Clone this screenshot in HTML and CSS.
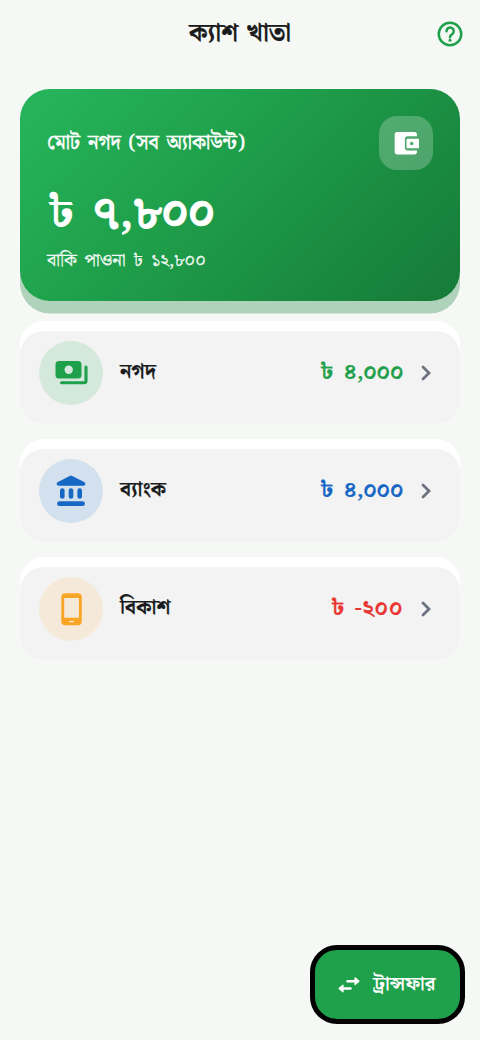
FILE: index.html
```html
<!DOCTYPE html>
<html lang="bn">
<head>
<meta charset="utf-8">
<title>ক্যাশ খাতা</title>
<link rel="stylesheet" href="styles.css">
</head>
<body>
<div class="screen">
  <header class="topbar">
    <h1 class="title">ক্যাশ খাতা</h1>
    <svg class="help" viewBox="0 0 24 24" fill="none" stroke="currentColor" stroke-width="2"><circle cx="12" cy="12" r="9"/><path d="M9.200 9.800a2.900 2.900 0 1 1 4.700 2.200c-1 .8-1.900 1.200-1.900 2.500" stroke-linecap="round"/><circle cx="12" cy="17" r="1.200" fill="currentColor" stroke="none"/></svg>
  </header>
  <main class="content">
    <section class="total">
      <div class="total-head">
        <span class="total-label">মোট নগদ (সব অ্যাকাউন্ট)</span>
        <span class="wallet"><svg viewBox="0 0 24 24" fill="currentColor"><path d="M20.700 17.800V19c0 1.100-.9 2-2 2H4.200a2 2 0 0 1-2-2V4.500c0-1.100.89-2 2-2h14.500c1.100 0 2 .9 2 2v1.500H13a2.300 2.300 0 0 0-2.300 2.300v7.200c0 1.300.9 2.300 2.300 2.300zM22.300 16V8H13a1 1 0 0 0-1 1v6a1 1 0 0 0 1 1zm-6-2.500a1.500 1.500 0 1 1 0-3 1.500 1.500 0 0 1 0 3z"/></svg></span>
      </div>
      <div class="total-value">৳ <span class="digits">৭,৮০০</span></div>
      <div class="total-due">বাকি পাওনা ৳ <span class="digits">১২,৮০০</span></div>
    </section>
    <section class="accounts">
      <article class="account cash">
        <span class="badge"><svg viewBox="0 0 33 33" fill="currentColor"><path fill-rule="evenodd" d="M4 4h19a3.500 3.500 0 0 1 3.500 3.500V18a3.500 3.500 0 0 1-3.500 3.500H4A3.500 3.500 0 0 1 .5 18V7.500A3.500 3.500 0 0 1 4 4zm9.700 4.600a4.200 4.200 0 1 0 0 8.400 4.200 4.200 0 0 0 0-8.400z"/><path d="M31 10v13.700a2 2 0 0 1-2 2H6.500" fill="none" stroke="currentColor" stroke-width="3.100" stroke-linecap="round"/></svg></span>
        <span class="name">নগদ</span>
        <span class="amount">৳ <span class="digits">৪,০০০</span></span>
        <svg class="chevron" viewBox="0 0 12 16"><path d="M3 2l6 6-6 6"/></svg>
      </article>
      <article class="account bank">
        <span class="badge"><svg viewBox="0 0 33 33" fill="currentColor"><path d="M14.800.9q1.200-.6 2.400 0l11.900 6.100c2 1.100 1.500 3.700-.8 3.700H3.700c-2.300 0-2.800-2.600-.8-3.700z"/><rect x="5" y="13.300" width="4.600" height="10.500" rx="2.300"/><rect x="13.700" y="13.300" width="4.600" height="10.500" rx="2.300"/><rect x="22.400" y="13.300" width="4.600" height="10.500" rx="2.300"/><rect x="2.100" y="26.300" width="27.800" height="4.800" rx="2.400"/></svg></span>
        <span class="name">ব্যাংক</span>
        <span class="amount">৳ <span class="digits">৪,০০০</span></span>
        <svg class="chevron" viewBox="0 0 12 16"><path d="M3 2l6 6-6 6"/></svg>
      </article>
      <article class="account mobile">
        <span class="badge"><svg viewBox="0 0 33 33" fill="currentColor"><path fill-rule="evenodd" d="M10.300.2h12.500a4 4 0 0 1 4 4v24a4 4 0 0 1-4 4H10.300a4 4 0 0 1-4-4v-24a4 4 0 0 1 4-4zM9.200 5v19.800h14.700V5zm5 22.900v1.400h4.700v-1.400z"/></svg></span>
        <span class="name">বিকাশ</span>
        <span class="amount wide">৳ <span class="digits">-২০০</span></span>
        <svg class="chevron" viewBox="0 0 12 16"><path d="M3 2l6 6-6 6"/></svg>
      </article>
    </section>
  </main>
  <button class="transfer">
    <svg viewBox="0 0 22 16"><path d="M9.500 4.200h8M12.500 11.500H5" fill="none" stroke="currentColor" stroke-width="2.500" stroke-linecap="round"/><path d="M17 .8l4 3.400-4 3.400zM5 8.100L1 11.500l4 3.400z" fill="currentColor" stroke="currentColor" stroke-width="1.200" stroke-linejoin="round"/></svg>
    <span>ট্রান্সফার</span>
  </button>
</div>
</body>
</html>
```
FILE: styles.css
```css
* { box-sizing: border-box; }
body {
  margin: 0;
  background: #f6f8f6;
  color: #191b1c;
  font-family: "Noto Serif Bengali", "Noto Sans Bengali", "Liberation Serif", serif;
}
.screen { height: 1040px; display: flex; flex-direction: column; overflow: hidden; }
.topbar {
  height: 68px;
  padding: 0 15px;
  display: grid;
  grid-template-columns: 30px 1fr 30px;
  align-items: center;
}
.title { grid-column: 2; margin: 0; text-align: center; font-size: 25px; font-weight: 700; line-height: 40px; word-spacing: 2px; -webkit-text-stroke: .2px currentColor; }
.help { width: 30px; height: 30px; color: #1fa04b; }
.content { padding: 21px 20px 0; flex: 1; }
.total {
  height: 212px;
  padding: 27px;
  border-radius: 30px;
  background: linear-gradient(135deg, #26b65b 0%, #1fa04b 40%, #167a38 100%);
  box-shadow: 0 12.500px 0 #afd2bb;
  color: #fff;
}
.total-head { display: flex; justify-content: space-between; align-items: center; height: 54px; }
.total-label { font-size: 20px; line-height: 30px; word-spacing: 3px; white-space: nowrap; -webkit-text-stroke: .5px currentColor; }
.wallet {
  width: 54px; height: 54px; border-radius: 18px; background: rgba(255, 255, 255, .23);
  display: grid; place-items: center;
}
.wallet svg { width: 29px; height: 29px; }
.total-value { margin-top: 16px; font-size: 45px; font-weight: 700; line-height: 56px; white-space: nowrap; word-spacing: 6px; }
.total-value .digits { letter-spacing: -1.200px; -webkit-text-stroke: .7px currentColor; }
.total-due { margin-top: 3px; font-size: 18.200px; line-height: 32px; word-spacing: 3px; color: rgba(255, 255, 255, .9); white-space: nowrap; -webkit-text-stroke: .3px currentColor; }
.total-due .digits { letter-spacing: -.5px; }
.accounts { margin-top: 30px; display: flex; flex-direction: column; gap: 25px; }
.account {
  height: 93px;
  padding: 10px 28px 19px 19px;
  border-radius: 24px;
  background: #f3f3f3;
  box-shadow: 0 -10px 0 #fff;
  display: flex;
  align-items: center;
}
.badge { width: 64px; height: 64px; border-radius: 50%; display: grid; place-items: center; }
.badge svg { width: 33px; height: 33px; }
.name { margin: 0 0 2px 17px; font-size: 20.500px; font-weight: 700; line-height: 36px; -webkit-text-stroke: .2px currentColor; }
.amount { margin: 0 0 2px auto; font-size: 22.500px; font-weight: 700; line-height: 36px; word-spacing: 4px; white-space: nowrap; -webkit-text-stroke: .2px currentColor; }
.amount .digits { letter-spacing: -.6px; }
.amount.wide .digits { letter-spacing: .4px; }
.chevron { width: 12px; height: 16px; margin-left: 17px; fill: none; stroke: #6b7280; stroke-width: 2.800; stroke-linecap: round; }
.cash .badge { color: #1fa04b; background: #d5e8dc; }
.cash .amount { color: #1fa04b; }
.bank .badge { color: #1767c4; background: #d3e0ed; }
.bank .amount { color: #1767c4; }
.mobile .badge { color: #faa526; background: #f5ead9; }
.mobile .amount { color: #e93632; }
.transfer {
  align-self: flex-end;
  width: 155px;
  height: 79px;
  margin: 0 15px 16px 0;
  padding: 0 0 0 23px;
  border: 5px solid #000;
  border-radius: 27px;
  background: #1fa04b;
  color: #fff;
  display: flex;
  align-items: center;
  gap: 13px;
  font: 700 19.800px/34px "Noto Serif Bengali", "Noto Sans Bengali", serif;
}
.transfer svg { width: 22px; height: 16px; flex: none; }
.transfer span { margin-bottom: 2px; }
```
